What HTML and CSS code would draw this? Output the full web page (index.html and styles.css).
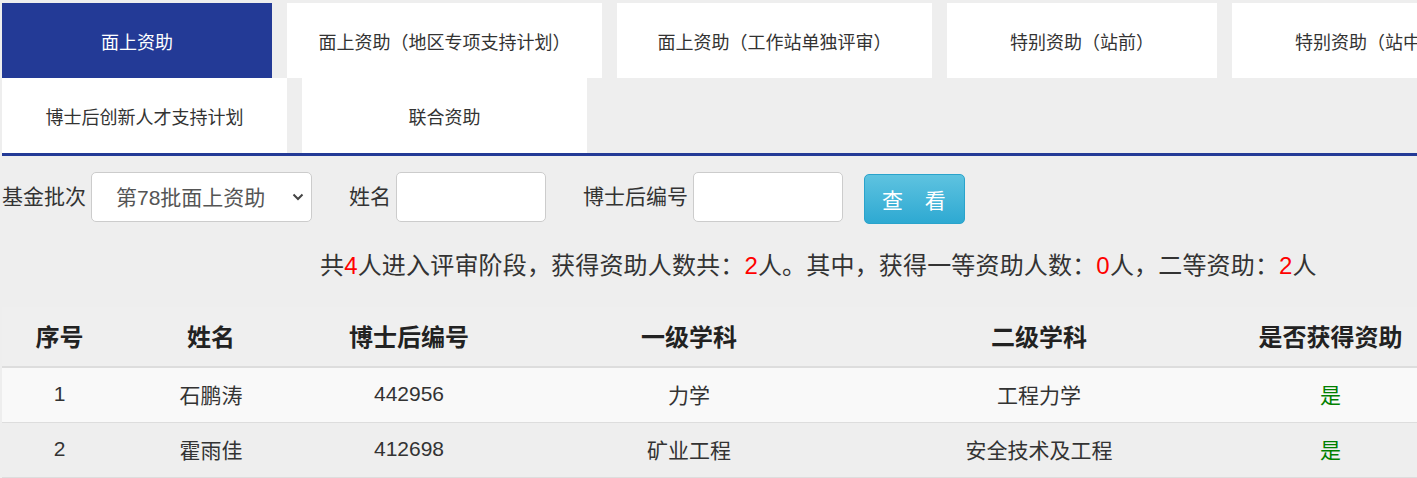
FILE: index.html
```html
<!DOCTYPE html>
<html lang="zh-CN">
<head>
<meta charset="utf-8">
<title>资助结果</title>
<link rel="stylesheet" href="styles.css">
</head>
<body>
<div class="page">
  <ul class="tabs">
    <li class="tab w270 active">面上资助</li>
    <li class="tab w315">面上资助（地区专项支持计划）</li>
    <li class="tab w315">面上资助（工作站单独评审）</li>
    <li class="tab w270">特别资助（站前）</li>
    <li class="tab w270">特别资助（站中）</li>
    <li class="tab w285">博士后创新人才支持计划</li>
    <li class="tab w285">联合资助</li>
  </ul>

  <form class="search">
    <label class="lbl">基金批次</label>
    <div class="select-wrap">
      <select class="select">
        <option>第78批面上资助</option>
      </select>
      <svg class="chev" width="12" height="8" viewBox="0 0 12 8"><path d="M1.5 1.5 L6 6 L10.5 1.5" fill="none" stroke="#444" stroke-width="2"/></svg>
    </div>
    <label class="lbl gap">姓名</label>
    <input class="field" type="text">
    <label class="lbl gap">博士后编号</label>
    <input class="field" type="text">
    <button class="btn" type="button">查 看</button>
  </form>

  <p class="summary">共<span class="red">4</span>人进入评审阶段，获得资助人数共：<span class="red">2</span>人。其中，获得一等资助人数：<span class="red">0</span>人，二等资助：<span class="red">2</span>人</p>

  <table class="results">
    <colgroup>
      <col class="c1"><col class="c2"><col class="c3"><col class="c4"><col class="c5"><col class="c6">
    </colgroup>
    <thead>
      <tr><th>序号</th><th>姓名</th><th>博士后编号</th><th>一级学科</th><th>二级学科</th><th>是否获得资助</th></tr>
    </thead>
    <tbody>
      <tr class="odd"><td>1</td><td>石鹏涛</td><td>442956</td><td>力学</td><td>工程力学</td><td class="yes">是</td></tr>
      <tr><td>2</td><td>霍雨佳</td><td>412698</td><td>矿业工程</td><td>安全技术及工程</td><td class="yes">是</td></tr>
    </tbody>
  </table>
</div>
</body>
</html>
```

FILE: styles.css
```css
html, body {
  margin: 0;
  padding: 0;
  background: #eeeeee;
  overflow: hidden;
}
body {
  font-family: "Liberation Sans", "Noto Sans CJK SC", sans-serif;
  color: #333;
}
.page {
  width: 1520px;
  margin-left: 2px;
}
.tabs {
  list-style: none;
  margin: 0;
  padding: 3px 0 0 0;
  display: flex;
  flex-wrap: wrap;
  border-bottom: 3px solid #233a96;
}
.tab {
  height: 75px;
  margin-right: 15px;
  background: #fff;
  display: flex;
  align-items: center;
  justify-content: center;
  font-size: 18px;
  color: #333;
  white-space: nowrap;
}
.tab.active {
  background: #233a96;
  color: #fff;
}
.w270 { width: 270px; }
.w315 { width: 315px; }
.w285 { width: 285px; }

.search {
  display: flex;
  align-items: center;
  margin: 15px 0 0 0;
  height: 52px;
}
.lbl {
  font-size: 21px;
  line-height: 30px;
  color: #333;
  margin-right: 5px;
}
.lbl.gap { margin-left: 37px; }
.select-wrap {
  position: relative;
  width: 221px;
  height: 50px;
}
.select {
  appearance: none;
  -webkit-appearance: none;
  width: 221px;
  height: 50px;
  box-sizing: border-box;
  border: 1px solid #ccc;
  border-radius: 5px;
  background: #fff;
  font-family: "Liberation Sans", "Noto Sans CJK SC", sans-serif;
  font-size: 21px;
  color: #555;
  padding: 0 0 0 24px;
  margin: 0;
}
.chev {
  position: absolute;
  right: 8px;
  top: 21px;
  pointer-events: none;
}
.field {
  width: 150px;
  height: 50px;
  box-sizing: border-box;
  border: 1px solid #ccc;
  border-radius: 5px;
  background: #fff;
  margin: 0;
  padding: 0 8px;
  font-size: 20px;
}
.btn {
  margin-left: 21px;
  width: 101px;
  height: 50px;
  box-sizing: border-box;
  border: 1px solid #2aa3cb;
  border-radius: 5px;
  background: linear-gradient(to bottom, #5ec3e0, #2ea9d2);
  color: #fff;
  font-family: "Liberation Sans", "Noto Sans CJK SC", sans-serif;
  font-size: 21px;
  letter-spacing: 8px;
  padding: 0 0 0 17px;
  text-align: left;
  margin-top: 4px;
}
.summary {
  margin: 26px 0 0 318px;
  font-size: 24px;
  line-height: 34px;
  letter-spacing: 0.17px;
  color: #333;
}
.red { color: #ff0000; }
.results {
  margin-top: 24px;
  width: 1446px;
  border-collapse: collapse;
  table-layout: fixed;
}
.c1 { width: 115px; }
.c2 { width: 188px; }
.c3 { width: 208px; }
.c4 { width: 352px; }
.c5 { width: 348px; }
.c6 { width: 235px; }
.results th {
  height: 56px;
  padding: 0 0 3px 0;
  font-size: 24px;
  font-weight: bold;
  color: #222;
  text-align: center;
  background: #efefef;
  border-bottom: 2px solid #dddddd;
}
.results td {
  height: 51px;
  padding: 0 0 3px 0;
  font-size: 21px;
  text-align: center;
  color: #333;
  border-bottom: 1px solid #dddddd;
}
.results tr.odd td { background: #f9f9f9; }
.results td.yes { color: #008000; }
```
